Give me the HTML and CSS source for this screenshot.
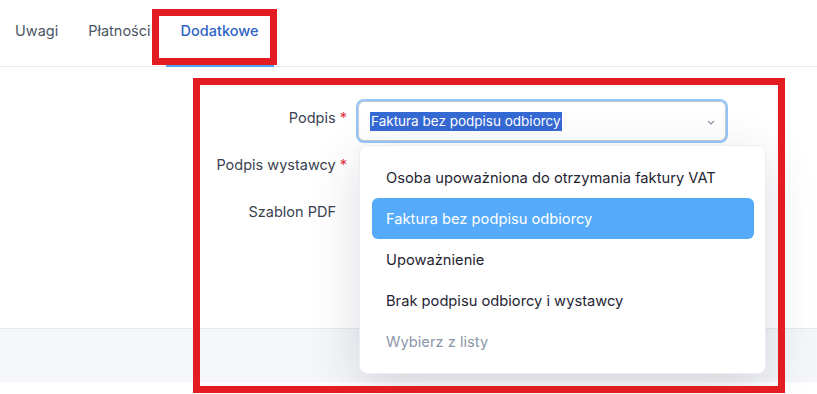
FILE: index.html
```html
<!DOCTYPE html>
<html lang="pl">
<head>
  <meta charset="UTF-8">
  <title>Dodatkowe</title>
  <link rel="stylesheet" href="styles.css">
</head>
<body>
  <div class="page">
    <nav class="tabs">
      <a class="tab">Uwagi</a>
      <a class="tab">Płatności</a>
      <a class="tab active">Dodatkowe</a>
    </nav>

    <section class="form">
      <div class="row">
        <label class="label">Podpis <span class="req">*</span></label>
        <div class="field">
          <div class="select focused">
            <span class="selected-text">Faktura bez podpisu odbiorcy</span>
            <svg class="chevron" width="8" height="5" viewBox="0 0 8 5"><polyline points="1,1 4,4 7,1" fill="none" stroke="#8a94a6" stroke-width="1.1"/></svg>
          </div>
          <ul class="menu">
            <li class="option">Osoba upoważniona do otrzymania faktury VAT</li>
            <li class="option active">Faktura bez podpisu odbiorcy</li>
            <li class="option">Upoważnienie</li>
            <li class="option">Brak podpisu odbiorcy i wystawcy</li>
            <li class="option placeholder">Wybierz z listy</li>
          </ul>
        </div>
      </div>
      <div class="row">
        <label class="label">Podpis wystawcy <span class="req">*</span></label>
        <div class="field"></div>
      </div>
      <div class="row">
        <label class="label plain">Szablon PDF</label>
        <div class="field"></div>
      </div>
    </section>

    <footer class="footer"></footer>

    <div class="mark mark-tab"></div>
    <div class="mark mark-form"></div>
  </div>
</body>
</html>
```

FILE: styles.css
```css
* { box-sizing: border-box; }
body {
  margin: 0;
  background: #fff;
  font-family: Inter, "Noto Sans", "Liberation Sans", sans-serif;
  font-size: 15px;
  color: #1f2937;
}
.page {
  position: relative;
  width: 817px;
  height: 394px;
  overflow: hidden;
}
.tabs {
  display: flex;
  height: 67px;
  border-bottom: 1px solid #e6e8ee;
}
.tab {
  display: flex;
  align-items: center;
  padding: 0 15px 3px;
  font-size: 14.5px;
  color: #4b5565;
  border-bottom: 3px solid transparent;
  margin-bottom: -1px;
}
.tab.active {
  color: #2f63c6;
  font-weight: 500;
  border-bottom-color: #4ea4f6;
}
.form {
  height: 261px;
  padding-top: 34px;
  display: flex;
  flex-direction: column;
  gap: 7px;
}
.row {
  display: grid;
  grid-template-columns: 347px 368px;
  column-gap: 11px;
  height: 40px;
}
.label {
  text-align: right;
  color: #3a4252;
  font-size: 14.5px;
  padding-top: 8px;
}
.label.plain { padding-right: 11px; }
.req { color: #e0393e; }
.field { position: relative; }
.select {
  height: 40px;
  border: 1px solid #cfd5df;
  border-radius: 6px;
  background: #fff;
  display: flex;
  align-items: center;
  justify-content: space-between;
  padding: 0 10px 0 11px;
}
.select.focused {
  box-shadow: 0 0 0 2px #94c6fb;
  border-color: #c3cad6;
}
.selected-text {
  background: #3569d4;
  color: #fff;
  font-size: 13.5px;
  padding: 1px 1px 2px;
  margin-top: 1px;
}
.chevron { margin-top: 3px; }
.menu {
  position: absolute;
  top: 44px;
  left: 1px;
  width: 407px;
  margin: 0;
  padding: 11px 11px 11px 12px;
  list-style: none;
  background: #fff;
  border: 1px solid #eceef3;
  border-radius: 8px;
  box-shadow: 0 14px 50px rgba(30, 35, 60, 0.16);
  z-index: 5;
}
.option {
  height: 41px;
  display: flex;
  align-items: center;
  padding: 0 14px;
  border-radius: 6px;
  font-size: 14.7px;
  color: #1f2533;
}
.option.active {
  background: #55aafa;
  color: #fff;
}
.option.placeholder { color: #8c96a8; }
.footer {
  height: 54px;
  background: #f5f6f9;
  border-top: 1px solid #e6e8ee;
}
.mark {
  position: absolute;
  border: 7px solid #e31b23;
  z-index: 10;
}
.mark-tab {
  left: 152px;
  top: 9px;
  width: 125px;
  height: 56px;
}
.mark-form {
  left: 193px;
  top: 78px;
  width: 592px;
  height: 315px;
}
```
